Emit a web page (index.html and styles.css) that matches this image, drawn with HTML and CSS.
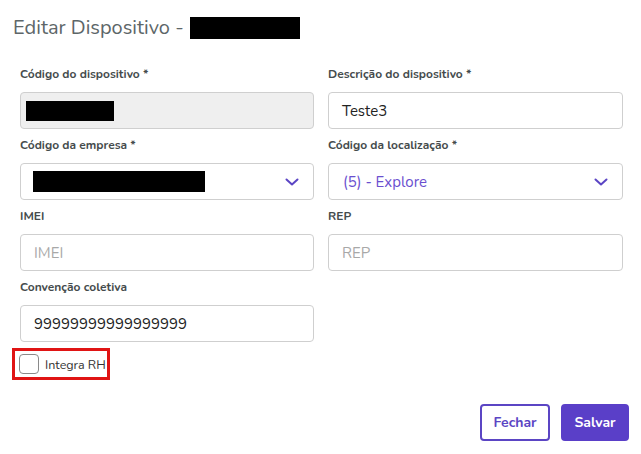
FILE: index.html
```html
<!DOCTYPE html>
<html lang="pt-BR">
<head>
<meta charset="utf-8">
<title>Editar Dispositivo</title>
<link rel="stylesheet" href="styles.css">
</head>
<body>
<div class="modal">
  <h1 class="title">Editar Dispositivo - <span class="redact redact-title"></span></h1>
  <form class="form">
    <div class="field">
      <label class="label">Código do dispositivo *</label>
      <div class="input input-disabled"><span class="redact redact-code"></span></div>
    </div>
    <div class="field">
      <label class="label">Descrição do dispositivo *</label>
      <div class="input">Teste3</div>
    </div>
    <div class="field">
      <label class="label">Código da empresa *</label>
      <div class="input select"><span class="redact redact-company"></span>
        <svg class="chev" width="14" height="8" viewBox="0 0 14 8"><path d="M1.5 1.5 L7 6.5 L12.5 1.5" fill="none" stroke="#5b45c4" stroke-width="2" stroke-linecap="round" stroke-linejoin="round"/></svg>
      </div>
    </div>
    <div class="field">
      <label class="label">Código da localização *</label>
      <div class="input select select-value">(5) - Explore
        <svg class="chev" width="14" height="8" viewBox="0 0 14 8"><path d="M1.5 1.5 L7 6.5 L12.5 1.5" fill="none" stroke="#5b45c4" stroke-width="2" stroke-linecap="round" stroke-linejoin="round"/></svg>
      </div>
    </div>
    <div class="field">
      <label class="label">IMEI</label>
      <div class="input placeholder">IMEI</div>
    </div>
    <div class="field">
      <label class="label">REP</label>
      <div class="input placeholder">REP</div>
    </div>
    <div class="field">
      <label class="label">Convenção coletiva</label>
      <div class="input">99999999999999999</div>
    </div>
    <div class="field"></div>
  </form>
  <div class="check-row">
    <div class="check-highlight">
      <span class="checkbox"></span>
      <span class="check-label">Integra RH</span>
    </div>
  </div>
  <div class="actions">
    <button class="btn btn-outline" type="button">Fechar</button>
    <button class="btn btn-primary" type="button">Salvar</button>
  </div>
</div>
</body>
</html>
```
FILE: styles.css
```css
* { box-sizing: border-box; }
html, body { margin: 0; padding: 0; background: #fff; }
body {
  font-family: "Nunito", "Lato", "Noto Sans", sans-serif;
  color: #333;
  width: 641px;
  height: 454px;
  overflow: hidden;
}
.modal {
  padding: 14px 12px 0 20px;
}
.title {
  margin: 0 0 0 -7px;
  font-weight: 400;
  font-size: 20px;
  line-height: 28px;
  color: #5d6668;
  display: flex;
  align-items: center;
  gap: 5px;
  height: 28px;
}
.redact { display: inline-block; background: #000; }
.redact-title { width: 110px; height: 22px; margin-left: 1px; }
.redact-code { width: 88px; height: 20px; margin-left: -8px; }
.redact-company { width: 172px; height: 21px; }
.form {
  margin-top: 24px;
  display: grid;
  grid-template-columns: 294px 295px;
  column-gap: 14px;
  row-gap: 8px;
}
.field { display: flex; flex-direction: column; }
.label {
  font-size: 12px;
  line-height: 16px;
  font-weight: 700;
  color: #454b4c;
  height: 16px;
  margin-bottom: 10px;
}
.input {
  height: 37px;
  border: 1px solid #cfcfcf;
  border-radius: 4px;
  background: #fff;
  padding: 0 13px;
  display: flex;
  align-items: center;
  font-size: 15px;
  color: #222;
}
.input-disabled { background: #efefef; }
.placeholder { color: #a8a8a8; }
.select { justify-content: space-between; padding-left: 12px; padding-right: 14px; }
.select-value { color: #6a4fcf; padding-left: 14px; }
.chev { display: block; }
.check-row {
  margin-top: 6px;
  margin-left: -8px;
}
.check-highlight {
  display: inline-flex;
  align-items: center;
  gap: 6px;
  width: 98px;
  height: 32px;
  border: 3px solid #e01414;
  padding-left: 4px;
  white-space: nowrap;
}
.checkbox {
  flex: none;
  width: 20px;
  height: 20px;
  border: 1.5px solid #8a8a8a;
  border-radius: 4px;
  background: #fff;
}
.check-label {
  font-size: 12.5px;
  color: #333;
}
.actions {
  display: flex;
  justify-content: flex-end;
  gap: 11px;
  margin-top: 24px;
}
.btn {
  height: 37px;
  border-radius: 4px;
  font-family: inherit;
  font-size: 14px;
  font-weight: 700;
  padding: 0;
  cursor: pointer;
}
.btn-outline {
  width: 70px;
  background: #fff;
  border: 2px solid #5b45c4;
  color: #5b45c4;
}
.btn-primary {
  width: 68px;
  background: #5a3fc8;
  border: 2px solid #5a3fc8;
  color: #fff;
}
```
